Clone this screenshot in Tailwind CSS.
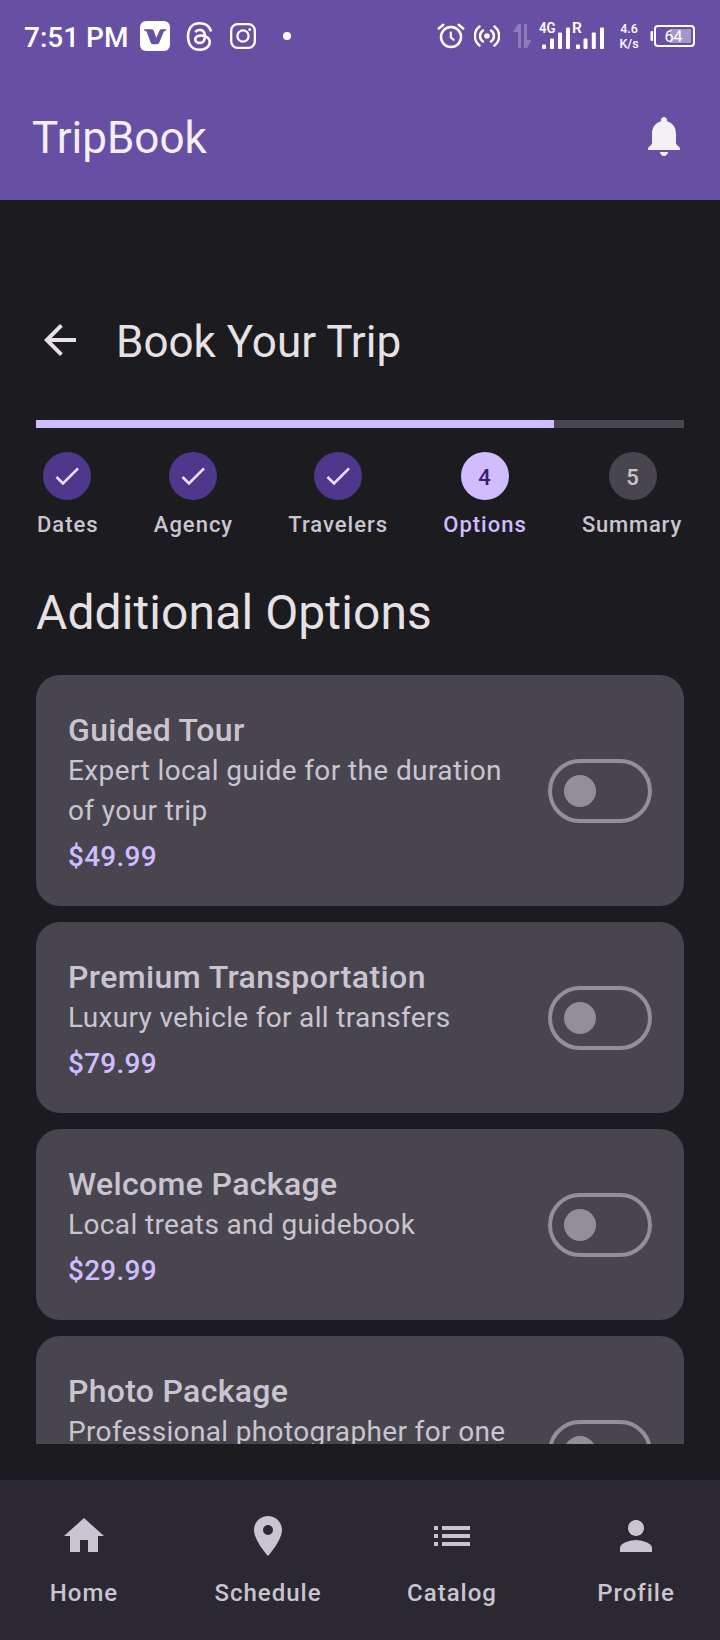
<!DOCTYPE html>
<html lang="en">
<head>
<meta charset="utf-8">
<title>TripBook</title>
<script src="https://cdn.jsdelivr.net/npm/@tailwindcss/browser@4"></script>
</head>
<body class="w-[720px] h-[1640px] overflow-hidden bg-[#1c1b1f] font-[Roboto,sans-serif] text-[#e6e1e5] flex flex-col">

<header class="h-[200px] shrink-0 bg-[#6750a4] flex flex-col">
  <div class="h-[72px] flex items-center pl-6 pr-6 text-white">
    <span class="w-[116px] text-[28px] leading-[30px] font-medium whitespace-nowrap pt-[3px]">7:51 PM</span>
    <svg class="size-[30px]" viewBox="0 0 30 30"><rect width="30" height="30" rx="6" fill="#fff"/><path d="M4 8.300h7.500c1.200 0 1.800.5 2.200 1.500l2.600 7.200 2.900-6.800c.6-1.400 1.200-1.900 2.500-1.900h4.500l-.8 2h-1.400l-4.700 11.300c-.5 1.200-1.200 1.700-2.400 1.700h-4c-1.200 0-1.800-.5-2.300-1.700L6.500 10.300H4.800z" fill="#6750a4"/></svg>
    <svg class="size-[29px] ml-[15px]" viewBox="0 0 24 24" fill="#fff"><path d="M12.186 24h-.007c-3.581-.024-6.334-1.205-8.184-3.509C2.35 18.44 1.5 15.586 1.472 12.01v-.017c.03-3.579.879-6.43 2.525-8.482C5.845 1.205 8.6.024 12.18 0h.014c2.746.02 5.043.725 6.826 2.098 1.677 1.29 2.858 3.13 3.509 5.467l-2.04.569c-1.104-3.96-3.898-5.984-8.304-6.015-2.91.022-5.11.936-6.54 2.717C4.307 6.504 3.616 8.914 3.589 12c.027 3.086.718 5.496 2.057 7.164 1.43 1.783 3.631 2.698 6.54 2.717 2.623-.02 4.358-.631 5.8-2.045 1.647-1.613 1.618-3.593 1.09-4.798-.31-.71-.873-1.3-1.634-1.75-.192 1.352-.622 2.446-1.284 3.272-.886 1.102-2.14 1.704-3.73 1.79-1.202.065-2.361-.218-3.259-.801-1.063-.689-1.685-1.74-1.752-2.964-.065-1.19.408-2.285 1.33-3.082.88-.76 2.119-1.207 3.583-1.291a13.853 13.853 0 0 1 3.02.142c-.126-.742-.375-1.332-.75-1.757-.513-.586-1.308-.883-2.359-.89h-.029c-.844 0-1.992.232-2.721 1.32L7.734 7.847c.98-1.454 2.568-2.256 4.478-2.256h.044c3.194.02 5.097 1.975 5.287 5.388.108.046.216.094.321.142 1.49.7 2.58 1.761 3.154 3.07.797 1.82.871 4.79-1.548 7.158-1.85 1.81-4.094 2.628-7.277 2.65Zm1.003-11.69c-.242 0-.487.007-.739.021-1.836.103-2.98.946-2.916 2.143.067 1.256 1.452 1.839 2.784 1.767 1.224-.065 2.818-.543 3.086-3.71a10.5 10.5 0 0 0-2.215-.221z"/></svg>
    <svg class="size-[26px] ml-4" viewBox="0 0 26 26" fill="none" stroke="#fff" stroke-width="2.300"><rect x="1.150" y="1.150" width="23.700" height="23.700" rx="6.500"/><circle cx="13" cy="13" r="5.600"/><circle cx="19.700" cy="6.400" r="1.500" fill="#fff" stroke="none"/></svg>
    <span class="size-2 ml-[27px] rounded-full bg-white"></span>

    <div class="ml-auto flex items-center">
      <svg class="w-7 h-[26px]" viewBox="0 0 28 26" fill="none" stroke="#fff" stroke-width="2.500" stroke-linecap="round"><circle cx="14" cy="14" r="10"/><path d="M1.800 5.500 6.300 1.700M26.200 5.500l-4.500-3.800"/><path d="M13.800 9.500v4.700l2.800 2.600" stroke-width="2.200"/></svg>
      <svg class="w-[26px] h-[22px] ml-[9px]" viewBox="0 0 26 22" fill="none" stroke="#fff" stroke-width="2.500" stroke-linecap="round"><circle cx="13" cy="11" r="2.800" fill="#fff" stroke="none"/><path d="M9 5.500a6.600 6.600 0 0 0 0 11M17 5.500a6.600 6.600 0 0 1 0 11M5.500 1.500a12 12 0 0 0 0 19M20.500 1.500a12 12 0 0 1 0 19"/></svg>
      <svg class="w-[18px] h-[26px] ml-[13px]" viewBox="0 0 18 26" fill="#fff" opacity=".25"><path d="M5 1H8v24H5V9H0zM11 1h3v16h4.500L14 25h-3z"/></svg>
      <svg class="w-[68px] h-[30px] ml-[7px] overflow-visible" viewBox="538 20 68 30" fill="#fff"><g font-family="Roboto" font-weight="600" font-size="14"><text x="539" y="32" textLength="16.500" lengthAdjust="spacingAndGlyphs">4G</text><text x="572" y="31.700" font-size="15.500">R</text></g><rect x="542" y="43.500" width="4" height="4.500" rx="1"/><rect x="550" y="37.500" width="4" height="10.500" rx="1"/><rect x="558" y="31.500" width="4" height="16.500" rx="1"/><rect x="566" y="26.500" width="4" height="21.500" rx="1"/><rect x="576" y="43.500" width="4" height="4.500" rx="1"/><rect x="583.500" y="37.500" width="4" height="10.500" rx="1"/><rect x="591.800" y="31.500" width="4" height="16.500" rx="1"/><rect x="600" y="26.500" width="4" height="21.500" rx="1"/></svg>
      <div class="w-5 ml-[13px] text-[12.500px] leading-[15px] font-medium text-center whitespace-nowrap">4.6<br>K/s</div>
      <svg class="w-[46px] h-6 ml-[11px]" viewBox="650 24 46 24"><rect x="650.500" y="31" width="2.500" height="10" rx="1" fill="#fff"/><rect x="655" y="26" width="39" height="20" rx="3" fill="none" stroke="#fff" stroke-width="2"/><rect x="670" y="29" width="21" height="14" fill="#fff" opacity=".4"/><text x="664.500" y="41.700" font-family="Roboto" font-size="16.500" textLength="18" fill="#fff">64</text></svg>
    </div>
  </div>
  <div class="h-32 flex items-center justify-between px-8">
    <h1 class="text-[44px] leading-[56px] text-[#f4effa] pt-1">TripBook</h1>
    <svg class="size-12" viewBox="0 0 24 24" fill="#f4f1f4"><path d="M12 22c1.100 0 2-.9 2-2h-4c0 1.100.89 2 2 2zm6-6v-5c0-3.070-1.640-5.640-4.500-6.320V4c0-.83-.67-1.500-1.500-1.500s-1.500.67-1.500 1.500v.68C7.630 5.360 6 7.920 6 11v5l-2 2v1h16v-1l-2-2z"/></svg>
  </div>
</header>

<main class="h-[1280px] shrink-0 px-9 pt-[92px] flex flex-col">
  <div class="h-24 flex items-center">
    <svg class="size-12" viewBox="0 0 24 24" fill="#e6e1e5"><path d="M20 11H7.830l5.590-5.590L12 4l-8 8 8 8 1.410-1.410L7.830 13H20v-2z"/></svg>
    <h2 class="ml-8 text-[44px] leading-[56px] pt-1">Book Your Trip</h2>
  </div>
  <div class="mt-8 h-2 bg-[#49454f] shrink-0"><div class="h-2 w-4/5 bg-[#d0bcff]"></div></div>

  <ol class="mt-6 flex justify-between text-[22px] leading-8 tracking-[1px] font-medium text-[#cac4d0]">
    <li class="flex flex-col items-center gap-[9px]"><span class="size-12 rounded-full bg-[#4f378b] flex items-center justify-center"><svg class="size-8" viewBox="0 0 24 24" fill="#eaddff"><path d="M9 16.170 4.830 12l-1.420 1.410L9 19 21 7l-1.410-1.410z"/></svg></span><span class="pl-px">Dates</span></li>
    <li class="flex flex-col items-center gap-[9px]"><span class="size-12 rounded-full bg-[#4f378b] flex items-center justify-center"><svg class="size-8" viewBox="0 0 24 24" fill="#eaddff"><path d="M9 16.170 4.830 12l-1.420 1.410L9 19 21 7l-1.410-1.410z"/></svg></span>Agency</li>
    <li class="flex flex-col items-center gap-[9px]"><span class="size-12 rounded-full bg-[#4f378b] flex items-center justify-center"><svg class="size-8" viewBox="0 0 24 24" fill="#eaddff"><path d="M9 16.170 4.830 12l-1.420 1.410L9 19 21 7l-1.410-1.410z"/></svg></span>Travelers</li>
    <li class="flex flex-col items-center gap-[9px] text-[#d0bcff]"><span class="size-12 rounded-full bg-[#d0bcff] text-[#381e72] flex items-center justify-center pt-[3px]">4</span>Options</li>
    <li class="flex flex-col items-center gap-[9px]"><span class="size-12 rounded-full bg-[#49454f] flex items-center justify-center pt-[3px]">5</span><span class="tracking-[.8px] pr-[2px]">Summary</span></li>
  </ol>

  <h3 class="mt-10 text-[48px] leading-[64px] tracking-[.1px]">Additional Options</h3>

  <div class="mt-[30px] h-[769px] shrink-0 overflow-hidden flex flex-col gap-4 text-[#cac4d0]">
    <section class="h-[231px] shrink-0 rounded-3xl bg-[#49454f] px-8 flex items-center justify-between">
      <div class="w-[448px] pt-[5px]"><h4 class="text-[32px] leading-[43px] tracking-[.35px] font-medium">Guided Tour</h4><p class="-mt-px text-[28px] leading-10 tracking-[.4px]">Expert local guide for the duration of your trip</p><p class="mt-[6px] text-[28px] leading-10 tracking-[.25px] font-medium text-[#d0bcff]">$49.99</p></div>
      <span class="w-[104px] h-16 rounded-full border-4 border-[#938f99] flex items-center pl-3"><span class="size-8 rounded-full bg-[#938f99]"></span></span>
    </section>
    <section class="h-[191px] shrink-0 rounded-3xl bg-[#49454f] px-8 flex items-center justify-between">
      <div class="w-[448px] pt-[5px]"><h4 class="text-[32px] leading-[43px] tracking-[.4px] font-medium">Premium Transportation</h4><p class="-mt-px text-[28px] leading-10 tracking-[.32px]">Luxury vehicle for all transfers</p><p class="mt-[6px] text-[28px] leading-10 tracking-[.25px] font-medium text-[#d0bcff]">$79.99</p></div>
      <span class="w-[104px] h-16 rounded-full border-4 border-[#938f99] flex items-center pl-3"><span class="size-8 rounded-full bg-[#938f99]"></span></span>
    </section>
    <section class="h-[191px] shrink-0 rounded-3xl bg-[#49454f] px-8 flex items-center justify-between">
      <div class="w-[448px] pt-[5px]"><h4 class="text-[32px] leading-[43px] tracking-[.35px] font-medium">Welcome Package</h4><p class="-mt-px text-[28px] leading-10 tracking-[.37px]">Local treats and guidebook</p><p class="mt-[6px] text-[28px] leading-10 tracking-[.25px] font-medium text-[#d0bcff]">$29.99</p></div>
      <span class="w-[104px] h-16 rounded-full border-4 border-[#938f99] flex items-center pl-3"><span class="size-8 rounded-full bg-[#938f99]"></span></span>
    </section>
    <section class="h-[231px] shrink-0 rounded-3xl bg-[#49454f] px-8 pt-8 flex items-start justify-between">
      <div class="w-[448px] pt-[2px]"><h4 class="text-[32px] leading-[43px] tracking-[.3px] font-medium">Photo Package</h4><p class="-mt-px text-[28px] leading-10 tracking-[.35px]">Professional photographer for one</p></div>
      <span class="mt-[52px] w-[104px] h-16 rounded-full border-4 border-[#938f99] flex items-center pl-3"><span class="size-8 rounded-full bg-[#938f99]"></span></span>
    </section>
  </div>
</main>

<nav class="h-40 shrink-0 bg-[#2b2831] grid grid-cols-[repeat(4,168px)] gap-4 pt-8 text-[24px] leading-8 tracking-[1px] font-medium text-[#cac4d0]">
  <a class="flex flex-col items-center gap-[17px]"><svg class="size-12" viewBox="0 0 24 24" fill="currentColor"><path d="M10 20v-6h4v6h5v-8h3L12 3 2 12h3v8z"/></svg>Home</a>
  <a class="flex flex-col items-center gap-[17px]"><svg class="size-12" viewBox="0 0 24 24" fill="currentColor"><path d="M12 2C8.130 2 5 5.130 5 9c0 5.250 7 13 7 13s7-7.750 7-13c0-3.870-3.130-7-7-7zm0 9.500a2.500 2.500 0 0 1 0-5 2.500 2.500 0 0 1 0 5z"/></svg>Schedule</a>
  <a class="flex flex-col items-center gap-[17px]"><svg class="size-12" viewBox="0 0 24 24" fill="currentColor"><path d="M3 13h2v-2H3v2zm0 4h2v-2H3v2zm0-8h2V7H3v2zm4 4h14v-2H7v2zm0 4h14v-2H7v2zM7 7v2h14V7H7z"/></svg>Catalog</a>
  <a class="flex flex-col items-center gap-[17px]"><svg class="size-12" viewBox="0 0 24 24" fill="currentColor"><path d="M12 12c2.210 0 4-1.790 4-4s-1.790-4-4-4-4 1.790-4 4 1.790 4 4 4zm0 2c-2.670 0-8 1.340-8 4v2h16v-2c0-2.660-5.330-4-8-4z"/></svg>Profile</a>
</nav>
</body>
</html>
